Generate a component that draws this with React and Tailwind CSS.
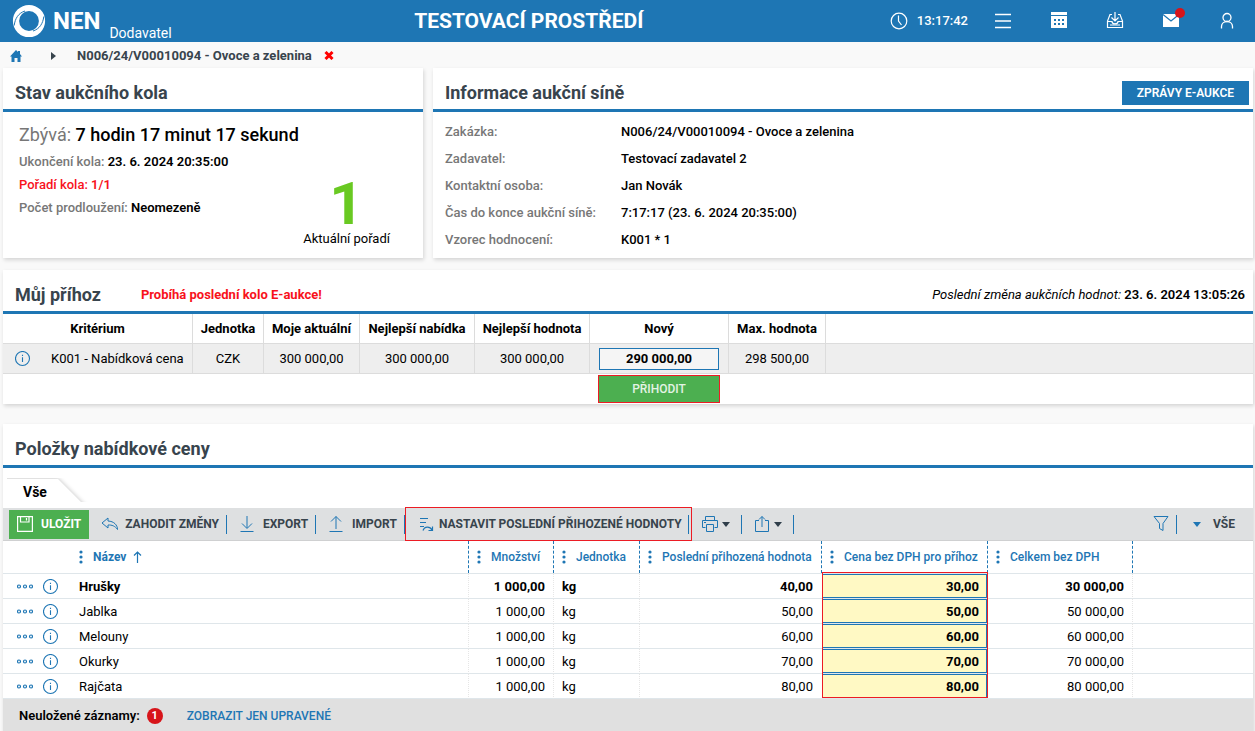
import React from "react";

const blue = "#1e76b4";

const Logo = () => (
  <svg width="34" height="34" viewBox="0 0 34 34" aria-hidden="true">
    <circle cx="17" cy="17" r="13" fill="none" stroke="#fff" strokeWidth="6.200" />
    <path d="M2.200 21.500C3 14.500 6.500 9 13 7" fill="none" stroke={blue} strokeWidth="1" />
    <path d="M31.800 12.500C31 19.500 27.500 25 21 27" fill="none" stroke={blue} strokeWidth="1" />
  </svg>
);

const Svg = ({ w = 18, h = 18, sw = 1, color = blue, children }) => (
  <svg width={w} height={h} viewBox={`0 0 ${w} ${h}`} fill="none" stroke={color} strokeWidth={sw} className="shrink-0" aria-hidden="true">
    {children}
  </svg>
);

const InfoIcon = () => (
  <Svg w={16} h={16} sw={1.1}>
    <circle cx="7.500" cy="7.500" r="7" />
    <path d="M7.500 6.300V11M7.500 3.800v1.200" />
  </Svg>
);

const Caret = ({ color = "#2f3e4a" }) => (
  <svg width="8" height="5" viewBox="0 0 8 5" fill={color} aria-hidden="true"><path d="M0 0h8L4 5z" /></svg>
);

const Dots = () => (
  <svg width="4" height="14" viewBox="0 0 4 14" fill={blue} aria-hidden="true">
    <circle cx="2" cy="2" r="1.600" /><circle cx="2" cy="7" r="1.600" /><circle cx="2" cy="12" r="1.600" />
  </svg>
);

const Sep = () => <span className="h-[19px] w-px shrink-0 bg-[#1e76b4]" />;

const Card = ({ className = "", children }) => (
  <section className={`bg-white shadow-[1px_2px_4px_rgba(0,0,0,0.15)] ${className}`}>{children}</section>
);

const CardHead = ({ title, children }) => (
  <div className="flex h-11 items-center border-b-[3px] border-[#1e76b4] pt-2 pl-3">
    <h2 className="text-[18px] font-bold text-[#38444d]">{title}</h2>
    {children}
  </div>
);

const statusRows = [
  ["Ukončení kola:", "23. 6. 2024 20:35:00", "text-[#777]", "text-black"],
  ["Pořadí kola:", "1/1", "text-[#f8121c]", "text-[#f8121c]"],
  ["Počet prodloužení:", "Neomezeně", "text-[#777]", "text-black"],
];

const infoRows = [
  ["Zakázka:", "N006/24/V00010094 - Ovoce a zelenina"],
  ["Zadavatel:", "Testovací zadavatel 2"],
  ["Kontaktní osoba:", "Jan Novák"],
  ["Čas do konce aukční síně:", "7:17:17 (23. 6. 2024 20:35:00)"],
  ["Vzorec hodnocení:", "K001 * 1"],
];

const items = [
  ["Hrušky", "40,00", "30,00", "30 000,00"],
  ["Jablka", "50,00", "50,00", "50 000,00"],
  ["Melouny", "60,00", "60,00", "60 000,00"],
  ["Okurky", "70,00", "70,00", "70 000,00"],
  ["Rajčata", "80,00", "80,00", "80 000,00"],
];

const HeadCell = ({ children }) => (
  <th scope="col" className="border-l border-dashed border-[#1e76b4] p-0 pl-2 font-medium">
    <span className="flex items-center gap-[10px] whitespace-nowrap"><Dots />{children}</span>
  </th>
);

function Header() {
  return (
    <header className="grid h-[42px] grid-cols-[33%_1fr_auto] items-center bg-[#1e76b4] text-white">
      <div className="flex h-full items-center pl-3">
        <Logo />
        <span className="pl-[7px] text-[24px] font-bold">NEN</span>
        <span className="self-end pl-[9px] text-[14px] leading-[18px]">Dodavatel</span>
      </div>
      <h1 className="text-[21px] leading-7 font-bold">TESTOVACÍ PROSTŘEDÍ</h1>
      <div className="flex items-center justify-end pr-[19px]">
        <span className="flex items-center gap-[9px] pr-[26px] text-[13px] font-medium">
          <Svg color="#fff" sw={1.2}><circle cx="9" cy="9" r="7.800" /><path d="M8.500 3.500V9l3 4" /></Svg>
          13:17:42
        </span>
        <span className="flex items-center gap-[38px]">
          <button aria-label="Menu"><Svg color="#fff"><path d="M1 2.500h16M1 9h16M1 15.500h16" strokeWidth="1.600" /></Svg></button>
          <button aria-label="Kalendář">
            <svg width="18" height="18" viewBox="0 0 18 18" fill="#fff" aria-hidden="true">
              <path d="M1 0h16v3H1zM1 4h16v12H1z" />
              <path d="M4 7h2v2H4zM8 7h2v2H8zM12 7h2v2h-2zM4 11h2v2H4zM8 11h2v2H8zM12 11h2v2h-2z" fill={blue} />
            </svg>
          </button>
          <button aria-label="Doručené"><Svg color="#fff" sw={1.2}><path d="M6 2.500H4L1.500 9v6.500h15V9L14 2.500h-2M1.500 9.500H6c0 3 6 3 6 0h4.500M9 0v8.500M5.500 5.500L9 9l3.500-3.500M4 13h10" /></Svg></button>
          <button aria-label="Zprávy" className="relative">
            <svg width="18" height="18" viewBox="0 0 18 18" fill="#fff" aria-hidden="true"><path d="M1 2h16v13H1z" /><path d="M1 2.500l8 6.500 8-6.500" fill="none" stroke={blue} strokeWidth="1.200" /></svg>
            <span className="absolute -top-[4px] -right-[5px] size-[10px] rounded-full bg-[#d7141a]" />
          </button>
          <button aria-label="Uživatel"><Svg color="#fff" sw={1.3}><circle cx="9" cy="5.500" r="4" /><path d="M3.500 16.500v-2C3.500 11.500 6 9.500 9 9.500s5.500 2 5.500 5v2" /></Svg></button>
        </span>
      </div>
    </header>
  );
}

function Bid() {
  const cell = "border-r border-b border-[#dcdcdc] p-0";
  return (
    <Card className="mt-3">
      <CardHead title="Můj příhoz">
        <strong className="pl-10 text-[13px] font-bold text-[#f8121c]">Probíhá poslední kolo E-aukce!</strong>
        <span className="ml-auto pr-2 text-[13px]"><em>Poslední změna aukčních hodnot:</em> <b className="font-semibold">23. 6. 2024 13:05:26</b></span>
      </CardHead>
      <table className="w-full table-fixed border-separate border-spacing-0 text-center text-[13px]">
        <colgroup>
          <col className="w-[48px]" /><col className="w-[142px]" /><col className="w-[71px]" /><col className="w-[96px]" /><col className="w-[115px]" />
          <col className="w-[115px]" /><col className="w-[139px]" /><col className="w-[97px]" /><col />
        </colgroup>
        <thead>
          <tr className="h-[30px]">
            <th colSpan="2" className={`${cell} font-bold`}>Kritérium</th>
            {["Jednotka", "Moje aktuální", "Nejlepší nabídka", "Nejlepší hodnota", "Nový", "Max. hodnota"].map((t) => (
              <th key={t} scope="col" className={`${cell} font-bold whitespace-nowrap`}>{t}</th>
            ))}
            <th className="border-b border-[#dcdcdc] p-0" />
          </tr>
        </thead>
        <tbody>
          <tr className="h-[30px] bg-[#eee]">
            <td className="border-b border-[#dcdcdc] p-0 pl-3"><button aria-label="Informace" className="block"><InfoIcon /></button></td>
            <td className={`${cell} text-left whitespace-nowrap`}>K001 - Nabídková cena</td>
            <td className={cell}>CZK</td>
            <td className={cell}>300 000,00</td>
            <td className={cell}>300 000,00</td>
            <td className={cell}>300 000,00</td>
            <td className={`${cell} px-[9px]`}>
              <input aria-label="Nový" defaultValue="290 000,00" className="block h-[22px] w-full border border-[#1e76b4] bg-[#f5f5f5] text-center text-[13px] font-bold" />
            </td>
            <td className={cell}>298 500,00</td>
            <td className="border-b border-[#dcdcdc] p-0" />
          </tr>
          <tr className="h-[30px]">
            <td colSpan="6" className="p-0" />
            <td className="p-0 pr-[9px] pl-2">
              <button className="block h-7 w-full border border-[#ec1c24] bg-[#4caf50] text-[12px] font-medium text-[#e3f3e4]">PŘIHODIT</button>
            </td>
            <td colSpan="2" className="p-0" />
          </tr>
        </tbody>
      </table>
    </Card>
  );
}

function Toolbar() {
  const btn = "flex h-full items-center text-[12px] font-bold text-[#38444d] whitespace-nowrap";
  return (
    <div className="flex h-[33px] items-center border-b border-[#cfd0d1] bg-[#dee0e1] pl-[6px]">
      <button className="flex h-[29px] items-center gap-2 bg-[#4caf50] px-2 text-[12px] font-bold text-white">
        <Svg w={16} h={16} color="#fff" sw={1.2}><path d="M.6.6h14.800v14.800H.6zM3.500.6v5.400h8.500V.6M9.500 2v2.500" /></Svg>
        ULOŽIT
      </button>
      <button className={`${btn} gap-[6px] pr-[7px] pl-3`}>
        <Svg><path d="M7 3L1 8l6 5v-3c4-.2 7 1 9.500 4.500C16.500 10 13 6.300 7 6z" /></Svg>
        ZAHODIT ZMĚNY
      </button>
      <Sep />
      <button className={`${btn} gap-[7px] pr-[7px] pl-[11px]`}>
        <Svg><path d="M9 1v12M4 8.500l5 5 5-5M2.500 16.500h13" /></Svg>
        EXPORT
      </button>
      <Sep />
      <button className={`${btn} gap-[7px] pr-[7px] pl-[11px]`}>
        <Svg><path d="M9 14V1.500M4 6.500l5-5 5 5M2.500 16.500h13" /></Svg>
        IMPORT
      </button>
      <Sep />
      <span className="-my-px flex h-[34px] shrink-0 items-center border border-[#ec1c24] pr-[2px] pl-[13px]">
        <button className={`${btn} gap-[5px] pr-[6px]`}>
          <Svg w={15} h={16} sw={1.2}><path d="M1 2.500h8M1 6.500h6M1 10.500h4M4 14.500c1.500-4.500 7-4.500 9-.5M13.500 10.500v4h-4" /></Svg>
          NASTAVIT POSLEDNÍ PŘIHOZENÉ HODNOTY
        </button>
        <Sep />
      </span>
      <button aria-label="Tisk" className="flex items-center gap-[3px] pr-[11px] pl-[9px]">
        <Svg><path d="M4.500 5V1.500h9V5M4.500 12.500h-3V5.500h15v7h-3M5.500 9.500h7v7h-7zM3 7.500h2" /></Svg>
        <Caret />
      </button>
      <Sep />
      <button aria-label="Sdílet" className="flex items-center gap-[3px] pr-[11px] pl-[11px]">
        <Svg><path d="M6 5.500H2.500v11h13v-11H12M9 12V1.500M6 4.500l3-3 3 3" /></Svg>
        <Caret />
      </button>
      <Sep />
      <div className="ml-auto flex items-center pr-[18px]">
        <button aria-label="Filtr" className="pr-[6px]"><Svg><path d="M2 1.500h14l-5 7v7l-3.500-2v-5z" /></Svg></button>
        <Sep />
        <button className={`${btn} gap-3 pl-4`}><Caret color={blue} />VŠE</button>
      </div>
    </div>
  );
}

function Items() {
  const cell = "border-b border-[#dfe6ea] p-0";
  const text = `${cell} pt-[2px]`;
  const split = `${text} border-l border-l-[#e6e6e6] [border-left-style:dotted]`;
  return (
    <table className="w-full table-fixed border-separate border-spacing-0 text-[13px]">
      <colgroup>
        <col className="w-[69px]" /><col className="w-[396px]" /><col className="w-[85px]" /><col className="w-[86px]" />
        <col className="w-[182px]" /><col className="w-[166px]" /><col className="w-[145px]" /><col />
      </colgroup>
      <thead>
        <tr className="h-8 text-left text-[12px] text-[#1e76b4]">
          <td className="p-0" />
          <th scope="col" className="p-0 pl-[7px] font-bold">
            <span className="flex items-center gap-[10px]"><Dots />
              <span className="flex items-center gap-[7px]">Název <Svg w={9} h={12} sw={1.2}><path d="M4.500 12V1M1 4.500L4.500 1 8 4.500" /></Svg></span>
            </span>
          </th>
          {["Množství", "Jednotka", "Poslední přihozená hodnota", "Cena bez DPH pro příhoz", "Celkem bez DPH"].map((t) => (
            <HeadCell key={t}>{t}</HeadCell>
          ))}
          <td className="border-l border-dashed border-[#1e76b4] p-0" />
        </tr>
        <tr className="h-px"><td colSpan="8" className="h-px bg-[#dfe6ea] p-0" /></tr>
      </thead>
      <tbody>
        {items.map(([name, last, price, total], i) => (
          <tr key={name} className={i === 0 ? "h-[25px] font-bold" : "h-[25px]"}>
            <td className={text}>
              <span className="flex items-center gap-[10px] pl-[14px]">
                <button aria-label="Akce" className="block">
                  <Svg w={16} h={6} sw={1.2}><circle cx="2" cy="2.500" r="1.500" /><circle cx="8" cy="2.500" r="1.500" /><circle cx="14" cy="2.500" r="1.500" /></Svg>
                </button>
                <button aria-label="Informace" className="block"><InfoIcon /></button>
              </span>
            </td>
            <td className={`${text} pl-[7px]`}>{name}</td>
            <td className={`${split} pr-2 text-right`}>1 000,00</td>
            <td className={`${split} pl-2`}>kg</td>
            <td className={`${split} pr-2 text-right`}>{last}</td>
            <td className={`${cell} relative pl-px`}>
              <input aria-label={`Cena bez DPH pro příhoz – ${name}`} defaultValue={price} className="block h-6 w-full border border-[#1e76b4] bg-[#fff9c4] pr-[7px] text-right text-[13px] font-bold" />
              {i === 0 && <span className="pointer-events-none absolute -top-[2px] -right-px left-px z-10 h-[126px] border border-[#ec1c24]" />}
            </td>
            <td className={`${split} pr-2 text-right`}>{total}</td>
            <td className={split} />
          </tr>
        ))}
      </tbody>
    </table>
  );
}

export default function App() {
  return (
    <div className="min-h-screen bg-[#f9f9f9] font-['Roboto',sans-serif] text-[13px] text-black">
      <Header />
      <nav aria-label="Navigace" className="flex h-[26px] items-center pt-px pl-[10px] font-bold text-[#38444d]">
        <a href="#" aria-label="Domů"><svg width="12" height="12" viewBox="0 0 12 12" fill={blue} aria-hidden="true"><path d="M6 0l2 2V1h2v3l2 2.500h-1.500V12h-3V8h-3v4h-3V6.500H0z" /></svg></a>
        <svg width="5" height="8" viewBox="0 0 5 8" className="mr-[21px] ml-[29px]" fill="#38444d" aria-hidden="true"><path d="M0 0l5 4-5 4z" /></svg>
        <a href="#">N006/24/V00010094 - Ovoce a zelenina</a>
        <button aria-label="Zavřít" className="ml-3"><Svg w={10} h={9} color="#f00" sw={3}><path d="M1.500 1l7 7M8.500 1l-7 7" /></Svg></button>
      </nav>
      <main className="pr-[2px] pl-[3px]">
        <div className="grid grid-cols-[21fr_41fr] gap-[10px]">
          <Card>
            <CardHead title="Stav aukčního kola" />
            <div className="relative px-4 pt-2">
              <p className="text-[18px] leading-[30px] font-medium"><span className="font-normal text-[#777]">Zbývá:</span> 7 hodin 17 minut 17 sekund</p>
              {statusRows.map(([k, v, a, b]) => (
                <p key={k} className="leading-[23px] font-medium"><span className={a}>{k}</span> <b className={`font-semibold ${b}`}>{v}</b></p>
              ))}
              <div className="absolute top-[65px] right-[33px] flex flex-col items-center">
                <span className="text-[60px] leading-[54px] font-bold text-[#69c922]">1</span>
                <span className="leading-4">Aktuální pořadí</span>
              </div>
            </div>
          </Card>
          <Card>
            <CardHead title="Informace aukční síně">
              <button className="mr-1 ml-auto h-6 bg-[#1e76b4] px-[15px] text-[12px] font-semibold text-white">ZPRÁVY E-AUKCE</button>
            </CardHead>
            <dl className="grid grid-cols-[176px_1fr] px-3 pt-[6px] pb-[5px] leading-[27px] font-medium">
              {infoRows.map(([k, v]) => (
                <React.Fragment key={k}>
                  <dt className="text-[#777]">{k}</dt>
                  <dd>{v}</dd>
                </React.Fragment>
              ))}
            </dl>
          </Card>
        </div>
        <Bid />
        <Card className="mt-5">
          <CardHead title="Položky nabídkové ceny" />
          <div className="flex h-10 items-start pt-[10px]">
            <button className="relative ml-1 h-6 w-[90px] overflow-hidden pt-1 pl-4 text-left text-[14px] font-bold">
              <span className="absolute top-px -left-10 h-10 w-[91px] origin-top skew-x-[45deg] bg-white shadow-[1px_-1px_4px_rgba(0,0,0,0.2)]" />
              <span className="relative">Vše</span>
            </button>
          </div>
          <Toolbar />
          <Items />
          <footer className="flex h-[34px] items-center bg-[#e0e0e0] pl-4">
            <span className="font-semibold">Neuložené záznamy:</span>
            <span className="ml-[7px] flex size-4 items-center justify-center rounded-full bg-[#d7141a] text-[11px] font-bold text-white">1</span>
            <a href="#" className="ml-6 text-[12px] font-medium text-[#1e76b4]">ZOBRAZIT JEN UPRAVENÉ</a>
          </footer>
        </Card>
      </main>
    </div>
  );
}
